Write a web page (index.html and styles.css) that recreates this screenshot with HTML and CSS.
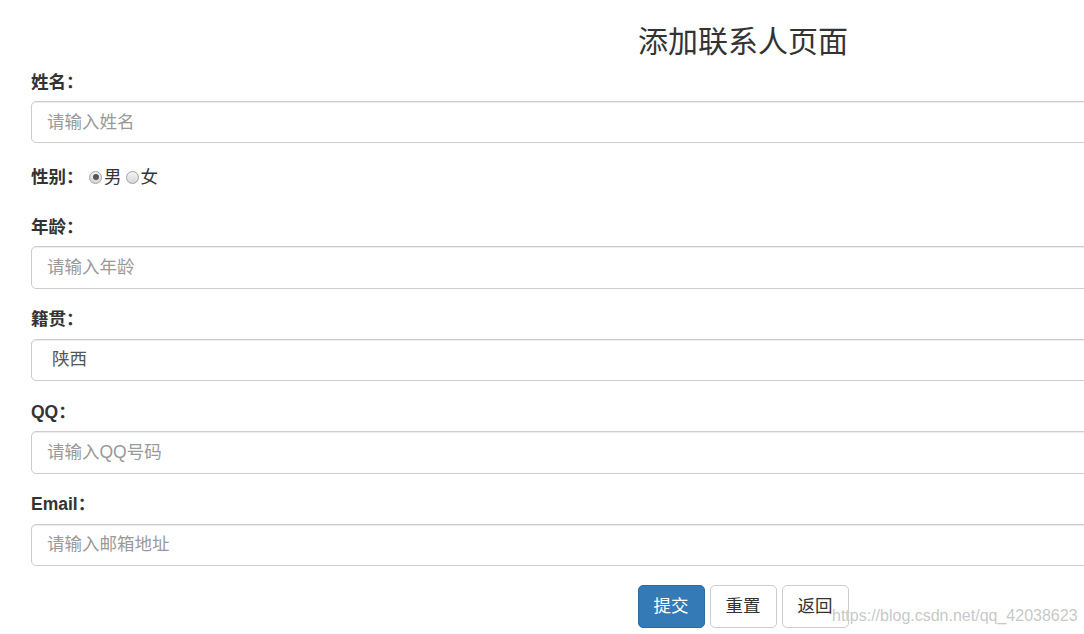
FILE: index.html
```html
<!DOCTYPE html>
<html lang="zh-CN">
<head>
<meta charset="utf-8">
<title>添加联系人页面</title>
<link rel="stylesheet" href="styles.css">
</head>
<body>
<div class="container">
  <h3 class="title">添加联系人页面</h3>
  <form class="form">
    <div class="form-group">
      <label class="label">姓名：</label>
      <input class="form-control" type="text" placeholder="请输入姓名">
    </div>
    <div class="form-group gender">
      <label class="label">性别：</label>
      <span class="radios">
        <input class="radio" type="radio" name="sex" checked><span class="rtext">男</span>
        <input class="radio" type="radio" name="sex"><span class="rtext">女</span>
      </span>
    </div>
    <div class="form-group">
      <label class="label">年龄：</label>
      <input class="form-control" type="text" placeholder="请输入年龄">
    </div>
    <div class="form-group">
      <label class="label">籍贯：</label>
      <div class="form-control select"><span>陕西</span></div>
    </div>
    <div class="form-group">
      <label class="label">QQ：</label>
      <input class="form-control" type="text" placeholder="请输入QQ号码">
    </div>
    <div class="form-group">
      <label class="label">Email：</label>
      <input class="form-control" type="text" placeholder="请输入邮箱地址">
    </div>
    <div class="actions">
      <button class="btn btn-primary" type="button">提交</button>
      <button class="btn btn-default" type="button">重置</button>
      <button class="btn btn-default" type="button">返回</button>
    </div>
  </form>
  <div class="watermark">https://blog.csdn.net/qq_42038623</div>
</div>
</body>
</html>
```
FILE: styles.css
```css
html, body {
  margin: 0;
  padding: 0;
  overflow: hidden;
  background: #fff;
}
body {
  font-family: "Liberation Sans", "Noto Sans CJK SC", Arial, sans-serif;
  font-size: 17.5px;
  line-height: 25px;
  color: #333;
}
.container {
  position: relative;
  display: flow-root;
  width: 1424px;
  padding-left: 31px;
  height: 634px;
}
.title {
  margin: 25px 0 11.5px;
  font-size: 30px;
  line-height: 33px;
  font-weight: 400;
  text-align: center;
  color: #333;
}
.form-group {
  margin-bottom: 18.75px;
}
.label {
  display: block;
  font-weight: 700;
  margin-bottom: 6.25px;
  line-height: 25px;
}
.form-control {
  display: block;
  box-sizing: border-box;
  width: 100%;
  height: 42.5px;
  padding: 7.5px 15px;
  font-family: inherit;
  font-size: 17.5px;
  line-height: 25px;
  color: #555;
  background: #fff;
  border: 1px solid #ccc;
  border-radius: 5px;
  box-shadow: inset 0 1px 1px rgba(0,0,0,.075);
  outline: none;
}
.form-control::placeholder {
  color: #999;
}
.select {
  padding-left: 20px;
}
.gender {
  display: flex;
  align-items: flex-start;
  box-sizing: border-box;
  height: 34px;
  padding-top: 2.5px;
}
.gender .label {
  display: inline-block;
  width: 58px;
  margin: 0;
}
.radios {
  display: inline-flex;
  align-items: center;
  height: 25px;
}
.radio {
  appearance: none;
  -webkit-appearance: none;
  width: 13px;
  height: 13px;
  margin: 0 2px 0 0;
  border: 1px solid #a0a0a0;
  border-radius: 50%;
  background: linear-gradient(#f4f4f4, #d6d6d6);
  box-sizing: border-box;
  position: relative;
}
.radio:checked::after {
  content: "";
  position: absolute;
  left: 2.5px;
  top: 2.5px;
  width: 6px;
  height: 6px;
  border-radius: 50%;
  background: #555;
}
.rtext {
  margin-right: 4px;
  font-weight: 400;
  color: #333;
}
.actions {
  display: flex;
  justify-content: center;
  gap: 5px;
}
.btn {
  box-sizing: border-box;
  height: 43px;
  padding: 7.5px 15px;
  font-family: inherit;
  font-size: 17.5px;
  line-height: 25px;
  border: 1px solid transparent;
  border-radius: 5px;
  cursor: pointer;
}
.btn-primary {
  color: #fff;
  background: #337ab7;
  border-color: #2e6da4;
}
.btn-default {
  color: #333;
  background: #fff;
  border-color: #ccc;
}
.watermark {
  position: absolute;
  left: 832px;
  top: 605px;
  font-family: "Liberation Sans", Arial, sans-serif;
  font-size: 16px;
  line-height: 22px;
  color: rgba(185,185,185,0.8);
  text-shadow: 0 0 1px #fff;
  white-space: nowrap;
}
```
